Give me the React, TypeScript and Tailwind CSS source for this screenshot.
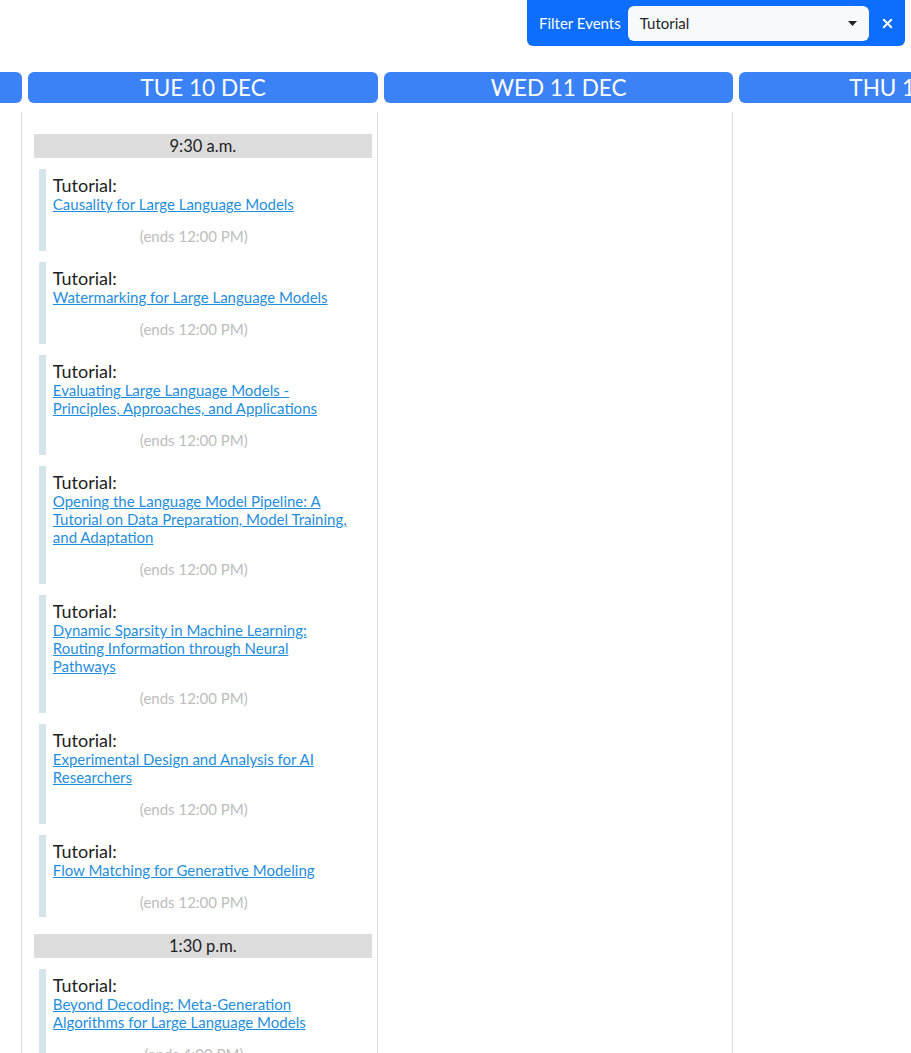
import { X } from "lucide-react";

type Session = { title: string; ends: string };

const morning: Session[] = [
  { title: "Causality for Large Language Models", ends: "12:00 PM" },
  { title: "Watermarking for Large Language Models", ends: "12:00 PM" },
  {
    title: "Evaluating Large Language Models - Principles, Approaches, and Applications",
    ends: "12:00 PM",
  },
  {
    title:
      "Opening the Language Model Pipeline: A Tutorial on Data Preparation, Model Training, and Adaptation",
    ends: "12:00 PM",
  },
  {
    title: "Dynamic Sparsity in Machine Learning: Routing Information through Neural Pathways",
    ends: "12:00 PM",
  },
  { title: "Experimental Design and Analysis for AI Researchers", ends: "12:00 PM" },
  { title: "Flow Matching for Generative Modeling", ends: "12:00 PM" },
];

const afternoon: Session[] = [
  { title: "Beyond Decoding: Meta-Generation Algorithms for Large Language Models", ends: "4:00 PM" },
  { title: "Fairness and Bias in Large Language Models", ends: "4:00 PM" },
];

function TimeSlot({ label }: { label: string }) {
  return (
    <div className="h-[24px] bg-[#dcdcdc] text-center text-[16.5px] leading-[24px] text-[#222]">
      {label}
    </div>
  );
}

function EventCard({ session }: { session: Session }) {
  return (
    <div className="mt-[11px] ml-[5px] border-l-[7px] border-[#d3e5ea] pl-[7px] pr-[21px] pt-[6px] pb-[6px]">
      <div className="text-[18px] leading-[20px] text-[#222]">Tutorial:</div>
      <a href="#" className="block text-[15px] leading-[18px] text-[#1f8edc] underline">
        {session.title}
      </a>
      <div className="mt-[14px] pr-[16px] text-center text-[15px] leading-[18px] text-[#bdbdbd]">
        (ends {session.ends})
      </div>
    </div>
  );
}

function DayHeader({ label }: { label: string }) {
  return (
    <div className="ml-[6px] h-[31px] rounded-md bg-[#3b82f6] text-center text-[22.5px] leading-[31px] text-white">
      {label}
    </div>
  );
}

export default function App() {
  return (
    <div
      className="min-h-screen overflow-hidden bg-white"
      style={{ fontFamily: "Lato, 'Open Sans', sans-serif" }}
    >
      <div className="flex justify-end pr-[6px]">
        <div className="flex h-[46px] w-[378px] items-center rounded-b-md bg-[#0d6efd] pl-[12px] pr-[10px]">
          <span className="text-[15px] leading-[20px] text-white">Filter Events</span>
          <div className="ml-[7px] flex h-[35px] w-[241px] items-center justify-between rounded-md bg-[#f8f9fa] pl-[12px] pr-[12px]">
            <span className="text-[15px] text-[#212529]">Tutorial</span>
            <svg width="9" height="5" viewBox="0 0 9 5">
              <path d="M0 0h9L4.5 5z" fill="#212529" />
            </svg>
          </div>
          <X className="ml-[11px] h-[15px] w-[15px] text-white" strokeWidth={3} />
        </div>
      </div>

      <div className="mt-[26px] -ml-[333.2px] flex">
        {/* Mon */}
        <div className="flex w-[355.5px] shrink-0 flex-col">
          <DayHeader label="MON 9 DEC" />
          <div className="mt-[9px] flex-1 border-r border-[#ddd]" />
        </div>

        {/* Tue */}
        <div className="flex w-[355.5px] shrink-0 flex-col">
          <DayHeader label="TUE 10 DEC" />
          <div className="mt-[9px] flex-1 border-r border-[#ddd] pl-[11.5px] pr-[5px] pt-[22px] pb-[20px]">
            <TimeSlot label="9:30 a.m." />
            {morning.map((s) => (
              <EventCard key={s.title} session={s} />
            ))}
            <div className="mt-[17px]">
              <TimeSlot label="1:30 p.m." />
            </div>
            {afternoon.map((s) => (
              <EventCard key={s.title} session={s} />
            ))}
          </div>
        </div>

        {/* Wed */}
        <div className="flex w-[355.5px] shrink-0 flex-col">
          <DayHeader label="WED 11 DEC" />
          <div className="mt-[9px] flex-1 border-r border-[#ddd]" />
        </div>

        {/* Thu */}
        <div className="flex w-[355.5px] shrink-0 flex-col">
          <DayHeader label="THU 12 DEC" />
          <div className="mt-[9px] flex-1 border-r border-[#ddd]" />
        </div>
      </div>
    </div>
  );
}
